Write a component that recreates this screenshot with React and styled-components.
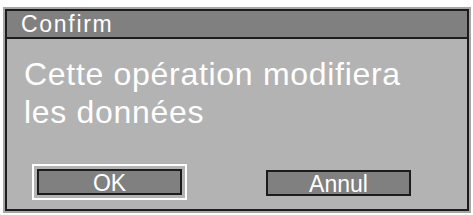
import styled, { createGlobalStyle } from "styled-components";

const GlobalStyle = createGlobalStyle`
  html, body {
    margin: 0;
    padding: 0;
    background: #ffffff;
  }
  body {
    font-family: "Liberation Sans", Arial, sans-serif;
  }
`;

const Page = styled.div`
  padding: 7px 0 0 3px;
`;

const Frame = styled.div`
  width: 468px;
  height: 206px;
  box-sizing: border-box;
  border: 2px solid #a6a6a6;
`;

const Window = styled.div`
  height: 100%;
  box-sizing: border-box;
  border: 2px solid #1c1c1c;
  display: flex;
  flex-direction: column;
  background: #b3b3b3;
`;

const Header = styled.div`
  height: 26px;
  border-bottom: 2px solid #1c1c1c;
  background: #808080;
  color: #ffffff;
  font-size: 23px;
  letter-spacing: 1.7px;
  line-height: 27px;
  padding-left: 14px;
`;

const Body = styled.div`
  flex: 1;
  display: flex;
  flex-direction: column;
  padding: 16px 0 13px 17px;
`;

const Message = styled.div`
  color: #ffffff;
  font-size: 32px;
  line-height: 38px;
  letter-spacing: 0.7px;
`;

const ButtonRow = styled.div`
  margin-top: auto;
  display: flex;
  gap: 84px;
  padding-left: 13px;
`;

const Button = styled.button`
  width: 145px;
  height: 26px;
  box-sizing: border-box;
  padding: 0;
  border: 2px solid #1c1c1c;
  background: #808080;
  color: #ffffff;
  font-family: "Liberation Sans", Arial, sans-serif;
  font-size: 23px;
  line-height: 24px;
  outline: ${(props) => (props.$focused ? "2px solid #ffffff" : "none")};
  outline-offset: 3px;
  margin-top: ${(props) => (props.$focused ? "0" : "1px")};
  cursor: pointer;
`;

export default function App() {
  return (
    <>
      <GlobalStyle />
      <Page>
        <Frame>
          <Window>
            <Header>Confirm</Header>
            <Body>
              <Message>
                Cette opération modifiera
                <br />
                les données
              </Message>
              <ButtonRow>
                <Button $focused>OK</Button>
                <Button>Annul</Button>
              </ButtonRow>
            </Body>
          </Window>
        </Frame>
      </Page>
    </>
  );
}
